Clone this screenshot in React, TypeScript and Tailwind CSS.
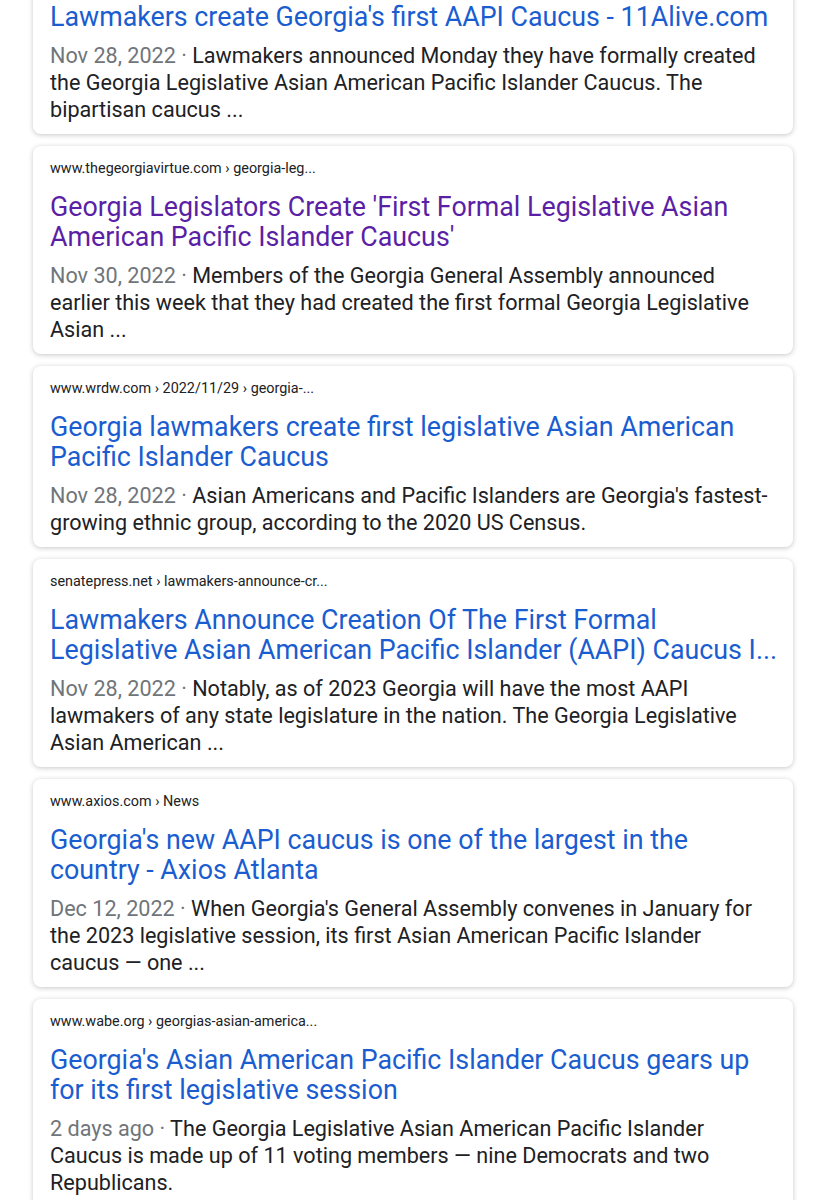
import React from "react";

type Card = {
  url?: string;
  title: string[];
  visited?: boolean;
  date: string;
  snippet: string[];
};

const cards: Card[] = [
  {
    title: ["Lawmakers create Georgia's first AAPI Caucus - 11Alive.com"],
    date: "Nov 28, 2022",
    snippet: [
      "Lawmakers announced Monday they have formally created",
      "the Georgia Legislative Asian American Pacific Islander Caucus. The",
      "bipartisan caucus ...",
    ],
  },
  {
    url: "www.thegeorgiavirtue.com › georgia-leg...",
    title: [
      "Georgia Legislators Create 'First Formal Legislative Asian",
      "American Pacific Islander Caucus'",
    ],
    visited: true,
    date: "Nov 30, 2022",
    snippet: [
      "Members of the Georgia General Assembly announced",
      "earlier this week that they had created the first formal Georgia Legislative",
      "Asian ...",
    ],
  },
  {
    url: "www.wrdw.com › 2022/11/29 › georgia-...",
    title: [
      "Georgia lawmakers create first legislative Asian American",
      "Pacific Islander Caucus",
    ],
    date: "Nov 28, 2022",
    snippet: [
      "Asian Americans and Pacific Islanders are Georgia's fastest-",
      "growing ethnic group, according to the 2020 US Census.",
    ],
  },
  {
    url: "senatepress.net › lawmakers-announce-cr...",
    title: [
      "Lawmakers Announce Creation Of The First Formal",
      "Legislative Asian American Pacific Islander (AAPI) Caucus I...",
    ],
    date: "Nov 28, 2022",
    snippet: [
      "Notably, as of 2023 Georgia will have the most AAPI",
      "lawmakers of any state legislature in the nation. The Georgia Legislative",
      "Asian American ...",
    ],
  },
  {
    url: "www.axios.com › News",
    title: [
      "Georgia's new AAPI caucus is one of the largest in the",
      "country - Axios Atlanta",
    ],
    date: "Dec 12, 2022",
    snippet: [
      "When Georgia's General Assembly convenes in January for",
      "the 2023 legislative session, its first Asian American Pacific Islander",
      "caucus — one ...",
    ],
  },
  {
    url: "www.wabe.org › georgias-asian-america...",
    title: [
      "Georgia's Asian American Pacific Islander Caucus gears up",
      "for its first legislative session",
    ],
    date: "2 days ago",
    snippet: [
      "The Georgia Legislative Asian American Pacific Islander",
      "Caucus is made up of 11 voting members — nine Democrats and two",
      "Republicans.",
    ],
  },
];

function ResultCard({ c, first }: { c: Card; first?: boolean }) {
  return (
    <div
      className={
        "mx-[33px] rounded-[8px] bg-white px-[17px] pb-[11px] shadow-[0_1px_5px_rgba(32,33,36,0.25)] " +
        (first ? "-mt-[44px] pt-[46px]" : "pt-[13px]")
      }
    >
      {c.url && (
        <div className="whitespace-nowrap text-[14.4px] leading-[20px] text-[#202124]">{c.url}</div>
      )}
      <div
        className={
          (first ? "" : "mt-[13px] ") +
          "text-[26.8px] leading-[30px] " +
          (c.visited ? "text-[#5b1fa6]" : "text-[#1a5dd0]")
        }
      >
        {c.title.map((t, i) => (
          <div key={i} className="whitespace-nowrap">
            {t}
          </div>
        ))}
      </div>
      <div className="mt-[10px] text-[21.6px] leading-[27px] text-[#202124]">
        {c.snippet.map((s, i) => (
          <div key={i} className="whitespace-nowrap">
            {i === 0 && <span className="text-[#70757a]">{c.date} · </span>}
            {s}
          </div>
        ))}
      </div>
    </div>
  );
}

export default function App() {
  return (
    <div
      className="h-[1200px] w-[826px] overflow-hidden bg-white"
      style={{ fontFamily: "Roboto, 'Liberation Sans', sans-serif" }}
    >
      <div className="flex flex-col gap-[12px]">
        {cards.map((c, i) => (
          <ResultCard key={i} c={c} first={i === 0} />
        ))}
      </div>
    </div>
  );
}
